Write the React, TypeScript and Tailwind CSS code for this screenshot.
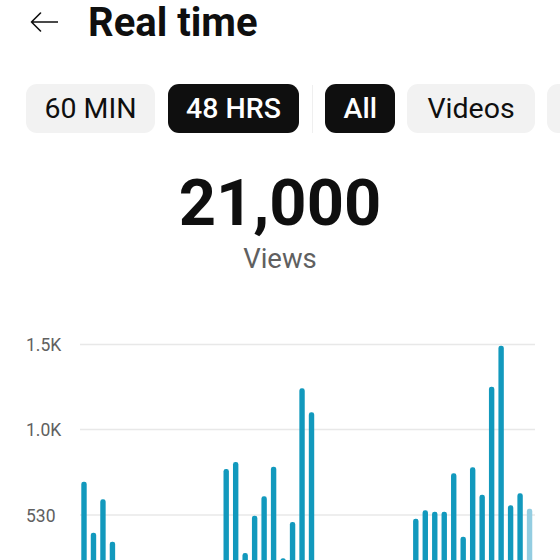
import React from "react";

const tops: (number | null)[] = [
  481.7, 532.7, 499.3, 541.7,
  null, null, null, null, null, null, null, null, null, null, null,
  469, 462, 553, 515.7, 496.3, 466.7, 558.3, 522, 388.3, 412.3,
  null, null, null, null, null, null, null, null, null, null,
  518.7, 510.3, 511.7, 511.7, 473.3, 536.7, 467.3, 494.7, 386.7, 345.7, 505.3, 493.3, 508.7,
];

const CHART_TOP = 330;

function Chart() {
  const grid = [
    { label: "1.5K", y: 344.5 },
    { label: "1.0K", y: 429.5 },
    { label: "530", y: 515 },
  ];
  return (
    <svg width="560" height="230" viewBox="0 0 560 230" className="block">
      {grid.map((g) => (
        <g key={g.label}>
          <line
            x1="80"
            x2="535"
            y1={g.y - CHART_TOP}
            y2={g.y - CHART_TOP}
            stroke="#e8e8e8"
            strokeWidth="1.4"
          />
          <text
            x="26"
            y={g.y - CHART_TOP + 6.5}
            fontSize="17.5"
            fill="#606060"
            fontFamily="Roboto, sans-serif"
          >
            {g.label}
          </text>
        </g>
      ))}
      {tops.map((t, i) => {
        if (t === null) return null;
        const cx = 84 + 9.48 * i;
        const last = i === tops.length - 1;
        return (
          <rect
            key={i}
            x={cx - 2.7}
            y={t - CHART_TOP}
            width="5.4"
            height={300}
            rx="2.4"
            fill={last ? "#93cde1" : "#1299bd"}
          />
        );
      })}
    </svg>
  );
}

function Chip({ label, active, extra }: { label: string; active?: boolean; extra?: string }) {
  return (
    <div
      className={
        (active
          ? "h-[49px] shrink-0 rounded-[11px] bg-[#0f0f0f] flex items-center pt-[2px] text-[28.5px] font-medium text-white "
          : "h-[49px] shrink-0 rounded-[11px] bg-[#f2f2f2] flex items-center pt-[2px] text-[28.5px] text-[#0f0f0f] ") +
        (extra ?? "px-[19px]")
      }
    >
      {label}
    </div>
  );
}

export default function App() {
  return (
    <div className="w-[560px] h-[560px] overflow-hidden bg-white font-['Roboto',sans-serif] text-[#0f0f0f]">
      <div className="h-[44px] flex items-center pl-[30px]">
        <svg width="28" height="20" viewBox="0 0 28 20" className="shrink-0">
          <path
            d="M1.5 10 H27.5 M10.5 1 L1.5 10 L10.5 19"
            fill="none"
            stroke="#0f0f0f"
            strokeWidth="1.6"
            strokeLinecap="round"
            strokeLinejoin="round"
          />
        </svg>
        <h1 className="ml-[30px] text-[40px] leading-[44px] font-bold pt-[1px]">Real time</h1>
      </div>

      <div className="mt-[40px] flex items-center gap-[12.5px] pl-[26px] overflow-hidden">
        <Chip label="60 MIN" extra="px-[18.5px]" />
        <Chip label="48 HRS" active extra="px-[18.5px]" />
        <div className="w-px h-[48px] bg-[#efefef] shrink-0" />
        <Chip label="All" active extra="px-[18px]" />
        <Chip label="Videos" extra="px-[20px]" />
        <div className="h-[49px] w-[120px] shrink-0 rounded-[11px] bg-[#f2f2f2]" />
      </div>

      <div className="mt-[34px] text-center text-[65px] leading-[72px] font-bold">21,000</div>
      <div className="mt-[3px] text-center text-[27.5px] leading-[34px] text-[#606060]">Views</div>

      <div className="mt-[54px]">
        <Chart />
      </div>
    </div>
  );
}
